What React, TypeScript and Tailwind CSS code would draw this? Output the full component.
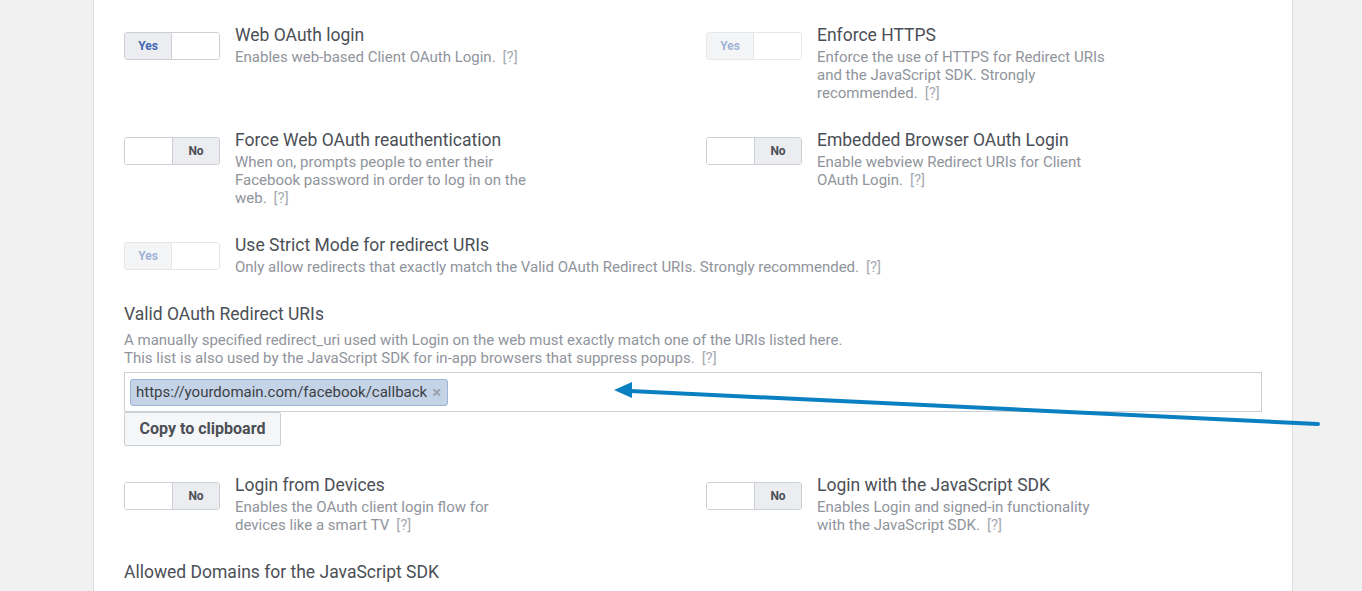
import React from "react"

type ToggleProps = { on: boolean; disabled?: boolean }

function Toggle({ on, disabled }: ToggleProps) {
  return (
    <div
      className={`mt-[7px] flex h-[28px] w-[96px] shrink-0 overflow-hidden rounded-[3px] border border-[#ccd0d5] text-[12px] font-bold ${
        disabled ? "opacity-50" : ""
      }`}
    >
      {on ? (
        <>
          <div className="flex w-[47px] items-center justify-center border-r border-[#ccd0d5] bg-[#ebedf0] text-[#4267b2]">
            Yes
          </div>
          <div className="flex-1 bg-white" />
        </>
      ) : (
        <>
          <div className="flex-1 border-r border-[#ccd0d5] bg-white" />
          <div className="flex w-[46px] items-center justify-center bg-[#ebedf0] text-[#4b4f56]">
            No
          </div>
        </>
      )}
    </div>
  )
}

function Help() {
  return <span className="ml-[7px] text-[#a7abb2]">[?]</span>
}

type SettingProps = {
  title: string
  desc: string
  on: boolean
  disabled?: boolean
  wide?: boolean
}

function Setting({ title, desc, on, disabled, wide }: SettingProps) {
  return (
    <div className="flex gap-[15px]">
      <Toggle on={on} disabled={disabled} />
      <div className={wide ? "" : "max-w-[300px]"}>
        <div className="text-[17.5px] leading-[20px] text-[#4b4f56]">{title}</div>
        <div className="mt-[3px] text-[15px] leading-[18px] text-[#90949c]">
          {desc}
          <Help />
        </div>
      </div>
    </div>
  )
}

export default function App() {
  return (
    <div
      className="relative h-[591px] overflow-hidden bg-[#f1f1f1]"
      style={{ fontFamily: "Roboto, 'Liberation Sans', sans-serif" }}
    >
      <div className="ml-[93px] h-full w-[1200px] border-x border-[#dadde1] bg-white px-[30px] pt-[25px]">
        <div className="grid grid-cols-[582px_1fr]">
          <Setting title="Web OAuth login" desc="Enables web-based Client OAuth Login." on />
          <Setting
            title="Enforce HTTPS"
            desc="Enforce the use of HTTPS for Redirect URIs and the JavaScript SDK. Strongly recommended."
            on
            disabled
          />
        </div>

        <div className="mt-7 grid grid-cols-[582px_1fr]">
          <Setting
            title="Force Web OAuth reauthentication"
            desc="When on, prompts people to enter their Facebook password in order to log in on the web."
            on={false}
          />
          <Setting
            title="Embedded Browser OAuth Login"
            desc="Enable webview Redirect URIs for Client OAuth Login."
            on={false}
          />
        </div>

        <div className="mt-7">
          <Setting
            title="Use Strict Mode for redirect URIs"
            desc="Only allow redirects that exactly match the Valid OAuth Redirect URIs. Strongly recommended."
            on
            disabled
            wide
          />
        </div>

        <div className="mt-7">
          <div className="text-[17.5px] leading-[20px] text-[#4b4f56]">Valid OAuth Redirect URIs</div>
          <div className="mt-[7px] text-[15px] leading-[18px] text-[#90949c]">
            A manually specified redirect_uri used with Login on the web must exactly match one of the URIs listed here.
            <br />
            This list is also used by the JavaScript SDK for in-app browsers that suppress popups.
            <Help />
          </div>
          <div className="mt-[5px] flex h-[40px] w-[1138px] items-center border border-[#ccd0d5] bg-white px-[5px]">
            <div className="flex h-[27px] items-center rounded-[3px] border border-[#9cb4d8] bg-[#c5d3e7] pl-[5px] pr-[6px] text-[15px] text-[#3b3f46]">
              https://yourdomain.com/facebook/callback
              <span className="ml-[5px] text-[17px] font-bold leading-none text-[#9aa3b0]">×</span>
            </div>
          </div>
          <button className="flex h-[34px] w-[157px] items-center justify-center rounded-[2px] border border-[#ccd0d5] bg-[#f5f6f7] text-[16px] font-bold text-[#4b4f56]">
            Copy to clipboard
          </button>
        </div>

        <div className="mt-[29px] grid grid-cols-[582px_1fr]">
          <Setting
            title="Login from Devices"
            desc="Enables the OAuth client login flow for devices like a smart TV"
            on={false}
          />
          <Setting
            title="Login with the JavaScript SDK"
            desc="Enables Login and signed-in functionality with the JavaScript SDK."
            on={false}
          />
        </div>

        <div className="mt-7 text-[17.5px] leading-[20px] text-[#4b4f56]">
          Allowed Domains for the JavaScript SDK
        </div>
      </div>

      <svg
        className="pointer-events-none absolute left-0 top-0"
        width="1362"
        height="591"
        viewBox="0 0 1362 591"
      >
        <line x1="1318" y1="424" x2="630" y2="391" stroke="#0a7fc2" strokeWidth="4" strokeLinecap="round" />
        <polygon points="614,390 632,382 632,398" fill="#0a7fc2" />
      </svg>
    </div>
  )
}
